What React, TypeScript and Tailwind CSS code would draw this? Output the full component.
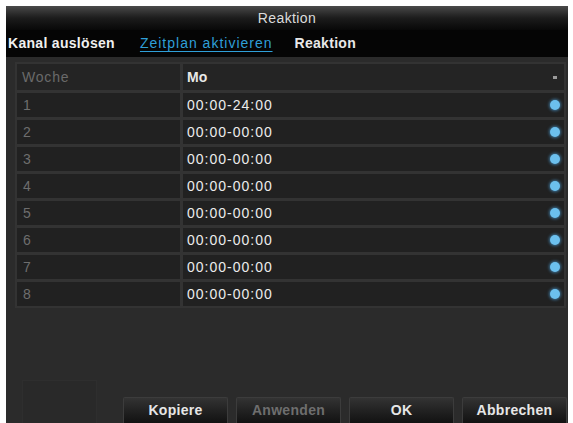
import React from 'react';

const rows = [
  { n: '1', t: '00:00-24:00' },
  { n: '2', t: '00:00-00:00' },
  { n: '3', t: '00:00-00:00' },
  { n: '4', t: '00:00-00:00' },
  { n: '5', t: '00:00-00:00' },
  { n: '6', t: '00:00-00:00' },
  { n: '7', t: '00:00-00:00' },
  { n: '8', t: '00:00-00:00' },
];

function Dot() {
  return (
    <span className="block w-[10px] h-[10px] rounded-full bg-[#6cc0ee] shadow-[0_0_3px_1px_rgba(80,170,230,0.6)]" />
  );
}

function FooterButton({ label, disabled }: { label: string; disabled?: boolean }) {
  return (
    <button
      className={`w-[105px] h-[26px] rounded-t-[2px] border border-b-0 border-[#3c3c3c] bg-gradient-to-b from-[#333333] to-[#121212] text-[14px] font-bold tracking-[0.3px] ${
        disabled ? 'text-[#6e6e6e]' : 'text-[#e6e6e6]'
      }`}
    >
      {label}
    </button>
  );
}

export default function App() {
  return (
    <div
      className="min-h-screen bg-white pl-[6px] pr-[5px] pt-[6px]"
      style={{ fontFamily: '"Liberation Sans", Arial, sans-serif' }}
    >
      <div className="flex h-[417px] flex-col bg-[#2b2b2b]">
        {/* title bar */}
        <div className="flex h-[24px] items-center justify-center bg-gradient-to-b from-[#4a4a4a] via-[#1c1c1c] to-[#080808] text-[14px] tracking-[0.4px] text-[#dcdcdc]">
          Reaktion
        </div>

        {/* tabs */}
        <div className="flex h-[27px] items-center bg-[#050505] pl-[2px] text-[14px] font-bold">
          <span className="text-[#f0f0f0] tracking-[0.3px]">Kanal auslösen</span>
          <span className="ml-[25px] font-normal text-[#2f9fd8] underline underline-offset-[3px] tracking-[1px]">
            Zeitplan aktivieren
          </span>
          <span className="ml-[22px] text-[#e8e8e8] tracking-[0.3px]">Reaktion</span>
        </div>

        {/* table */}
        <div className="pl-[9px] pr-[2px] pt-[5px]">
          <div className="flex flex-col gap-[3px] bg-[#333333] p-[2px]">
            <div className="flex h-[26px] text-[14px]">
              <div className="flex w-[163px] items-center bg-[#242424] pl-[5px] tracking-[0.8px] text-[#6a6a6a]">Woche</div>
              <div className="ml-[3px] flex flex-1 items-center justify-between bg-[#242424] pl-[4px] pr-[7px] font-bold text-[#e8e8e8]">
                <span>Mo</span>
                <span className="block w-[4px] h-[3px] bg-[#9a9a9a]" />
              </div>
            </div>
            {rows.map((r) => (
              <div key={r.n} className="flex h-[24px] text-[14px]">
                <div className="flex w-[163px] items-center bg-[#212121] pl-[6px] text-[#6e6e6e]">{r.n}</div>
                <div className="ml-[3px] flex flex-1 items-center justify-between bg-[#212121] pl-[4px] pr-[4px] text-[#ececec] tracking-[1px]">
                  <span>{r.t}</span>
                  <Dot />
                </div>
              </div>
            ))}
          </div>
        </div>

        {/* footer */}
        <div className="mt-auto flex items-end justify-between pl-[16px] pr-[1px]">
          <div className="h-[43px] w-[75px] border border-b-0 border-[#2e2e2e] bg-[#292929]" />
          <div className="flex gap-[8px]">
            <FooterButton label="Kopiere" />
            <FooterButton label="Anwenden" disabled />
            <FooterButton label="OK" />
            <FooterButton label="Abbrechen" />
          </div>
        </div>
      </div>
    </div>
  );
}
